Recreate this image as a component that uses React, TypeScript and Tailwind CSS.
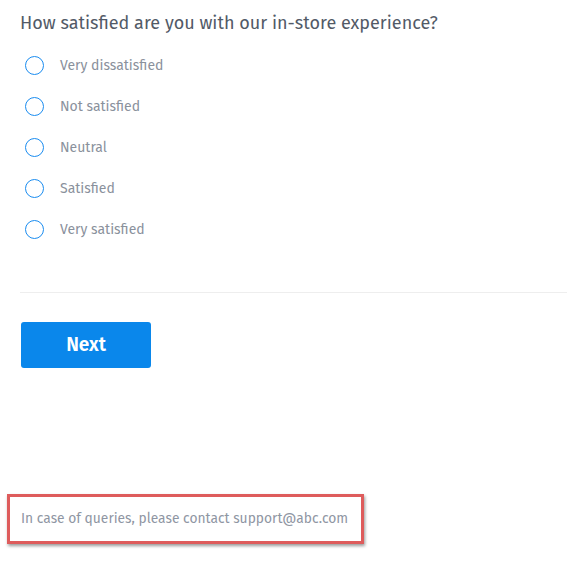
import React from "react";

const options = ["Very dissatisfied", "Not satisfied", "Neutral", "Satisfied", "Very satisfied"];

export default function App() {
  return (
    <div className="w-[567px] h-[568px] bg-white relative" style={{ fontFamily: '"Fira Sans", "Noto Sans", "Open Sans", sans-serif' }}>
      <div className="pl-[20px] pt-[11px]">
        <h1 className="text-[18px] leading-[24px] text-[#525a67]">How satisfied are you with our in-store experience?</h1>
        <div className="mt-[10px] flex flex-col">
          {options.map((o) => (
            <label key={o} className="flex items-center h-[41px]">
              <span className="ml-[5px] w-[19px] h-[19px] rounded-full border-[1.5px] border-[#1a8cf0] bg-white" />
              <span className="ml-[16px] text-[14px] text-[#8a919c]">{o}</span>
            </label>
          ))}
        </div>
        <div className="mt-[42px] h-px bg-[#eeeeee]" />
        <button className="ml-[1px] mt-[29px] w-[130px] h-[46px] rounded-[3px] bg-[#0a87eb] text-white text-[19px] font-semibold">Next</button>
      </div>
      <div className="mt-[126px] ml-[7px] w-[357px] h-[50px] border-[3px] border-[#de5c5c] shadow-[1px_2px_3px_rgba(0,0,0,0.4)] flex items-center pl-[11px]">
        <span className="text-[13.8px] text-[#8f96a3]">In case of queries, please contact support@abc.com</span>
      </div>
    </div>
  );
}
